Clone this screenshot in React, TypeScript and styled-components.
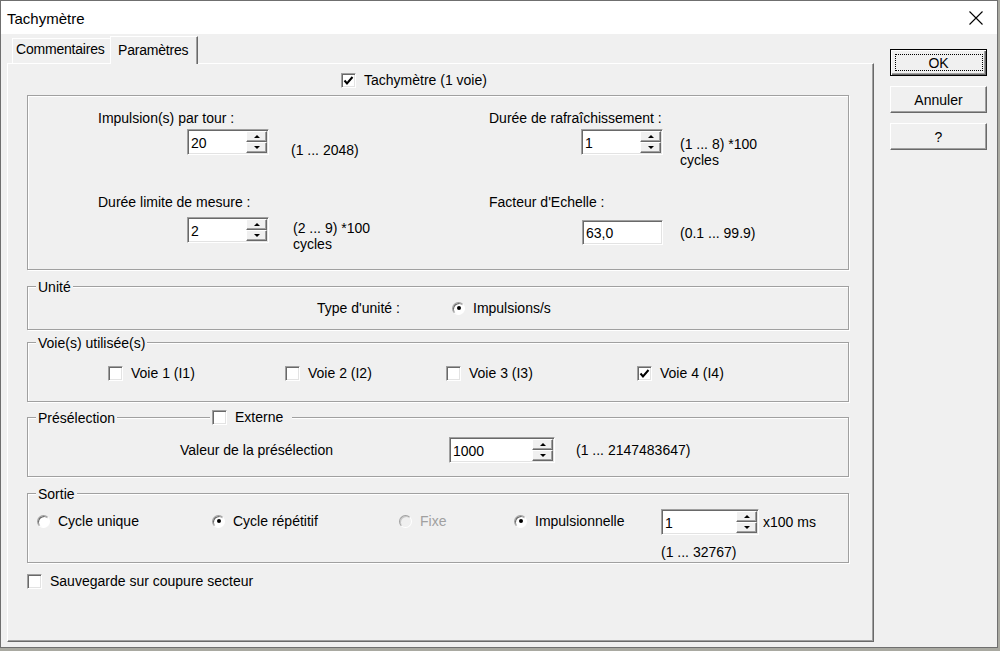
import React from "react";
import styled, { createGlobalStyle } from "styled-components";

const GlobalStyle = createGlobalStyle`
  html, body {
    margin: 0;
    padding: 0;
    background: #a9a9a1;
  }
  body {
    font-family: "Liberation Sans", Arial, sans-serif;
    font-size: 14px;
    color: #000;
  }
  * {
    box-sizing: border-box;
  }
`;

const Window = styled.div`
  width: 998px;
  height: 648px;
  display: flex;
  flex-direction: column;
  background: #f0f0f0;
  border: 1px solid #6f6f6f;
`;

const TitleBar = styled.div`
  flex: none;
  height: 33px;
  display: flex;
  align-items: center;
  justify-content: space-between;
  padding: 1px 14px 0 6px;
  background: #fff;
  font-size: 15px;
`;

const CloseButton = styled.div`
  display: flex;
  width: 14px;
  height: 14px;
`;

const Body = styled.div`
  flex: 1;
  display: flex;
  align-items: flex-start;
  padding: 2px 0 0 6px;
`;

const TabControl = styled.div`
  width: 867px;
  display: flex;
  flex-direction: column;
`;

const TabStrip = styled.div`
  height: 27px;
  display: flex;
  align-items: flex-end;
  padding-left: 5px;
`;

const Tab = styled.div<{ $active?: boolean; $width: number }>`
  position: relative;
  z-index: ${(p) => (p.$active ? 1 : 0)};
  width: ${(p) => p.$width}px;
  height: ${(p) => (p.$active ? 28 : 25)}px;
  margin-bottom: ${(p) => (p.$active ? -1 : 0)}px;
  padding: ${(p) => (p.$active ? "5px 0 0 7px" : "2px 0 0 3px")};
  line-height: 16px;
  white-space: nowrap;
  letter-spacing: -0.2px;
  background: #f0f0f0;
  border-top: 1px solid #fff;
  border-left: 1px solid #fff;
  border-right: ${(p) => (p.$active ? "1px solid #696969" : "none")};
  box-shadow: ${(p) => (p.$active ? "inset -1px 0 0 #a0a0a0" : "none")};
`;

const Panel = styled.div`
  height: 579px;
  padding: 8px 24px 0 19px;
  border: 1px solid;
  border-color: #fff #696969 #696969 #fff;
  box-shadow: inset -1px -1px 0 #a0a0a0;
`;

const HeaderRow = styled.div`
  display: flex;
  padding-left: 314px;
`;

const Group = styled.div<{ $height: number; $top: number }>`
  position: relative;
  height: ${(p) => p.$height}px;
  margin-top: ${(p) => p.$top}px;
  border: 1px solid #a0a0a0;
  box-shadow: inset 1px 1px 0 #fff, 1px 1px 0 #fff;
`;

const GroupTitle = styled.span`
  position: absolute;
  top: -8px;
  left: 8px;
  padding: 0 2px;
  line-height: 16px;
  background: #f0f0f0;
`;

const TitleCheck = styled.div`
  position: absolute;
  top: -9px;
  left: 182px;
  padding: 0 9px 0 2px;
  background: #f0f0f0;
`;

const ParamGrid = styled.div`
  display: grid;
  grid-template-columns: 391px 1fr;
  grid-template-rows: 84px auto;
  padding: 14px 0 0 70px;
`;

const Field = styled.div`
  display: flex;
  flex-direction: column;
`;

const Label = styled.div<{ $width?: number }>`
  line-height: 16px;
  white-space: nowrap;
  width: ${(p) => (p.$width ? `${p.$width}px` : "auto")};
  flex: none;
`;

const ControlRow = styled.div<{ $indent: number; $gap: number }>`
  display: flex;
  align-items: flex-start;
  margin-left: ${(p) => p.$indent}px;
  margin-top: ${(p) => p.$gap}px;
`;

const Hint = styled.div<{ $left: number; $top: number }>`
  margin-left: ${(p) => p.$left}px;
  margin-top: ${(p) => p.$top}px;
  line-height: 16px;
  white-space: nowrap;
`;

const Sunken = styled.div<{ $width: number; $height: number }>`
  flex: none;
  display: flex;
  align-items: stretch;
  width: ${(p) => p.$width}px;
  height: ${(p) => p.$height}px;
  padding: 1px;
  background: #fff;
  border: 1px solid;
  border-color: #a0a0a0 #fff #fff #a0a0a0;
  box-shadow: inset 1px 1px 0 #696969, inset -1px -1px 0 #e3e3e3;
`;

const Value = styled.div`
  flex: 1;
  display: flex;
  align-items: center;
  padding: 1px 0 0 2px;
`;

const SpinButtons = styled.div`
  display: flex;
  flex-direction: column;
  width: 21px;
`;

const SpinButton = styled.div`
  flex: 1;
  display: flex;
  align-items: center;
  justify-content: center;
  background: #f0f0f0;
  border: 1px solid;
  border-color: #fff #696969 #696969 #fff;
  box-shadow: inset -1px -1px 0 #a0a0a0;
`;

const Arrow = styled.span<{ $down?: boolean }>`
  width: 0;
  height: 0;
  border-left: 3px solid transparent;
  border-right: 3px solid transparent;
  border-bottom: ${(p) => (p.$down ? "none" : "3px solid #000")};
  border-top: ${(p) => (p.$down ? "3px solid #000" : "none")};
`;

const OptionRow = styled.div<{ $top: number; $left: number }>`
  display: flex;
  align-items: center;
  padding: ${(p) => `${p.$top}px 0 0 ${p.$left}px`};
`;

const ChannelGrid = styled.div`
  display: grid;
  grid-template-columns: 177px 161px 191px auto;
  padding: 22px 0 0 80px;
`;

const OutputGrid = styled.div`
  display: grid;
  grid-template-columns: 175px 187px 115px 147px auto;
  align-items: start;
  padding: 15px 0 0 9px;
`;

const OutputRadio = styled.div`
  margin-top: 4px;
`;

const SpinColumn = styled.div`
  display: flex;
  flex-direction: column;
`;

const SpinRow = styled.div`
  display: flex;
  align-items: center;
  gap: 4px;
`;

const Item = styled.label<{ $disabled?: boolean }>`
  display: flex;
  align-items: center;
  gap: 8px;
  height: 16px;
  line-height: 16px;
  white-space: nowrap;
  color: ${(p) => (p.$disabled ? "#a0a0a0" : "#000")};
`;

const Box = styled.span`
  flex: none;
  display: flex;
  align-items: center;
  justify-content: center;
  width: 15px;
  height: 15px;
  background: #fff;
  border: 1px solid;
  border-color: #a0a0a0 #fff #fff #a0a0a0;
  box-shadow: inset 1px 1px 0 #696969, inset -1px -1px 0 #e3e3e3;
`;

const Circle = styled.span<{ $disabled?: boolean }>`
  flex: none;
  display: flex;
  align-items: center;
  justify-content: center;
  width: 13px;
  height: 13px;
  border-radius: 50%;
  background: ${(p) => (p.$disabled ? "#f0f0f0" : "#fff")};
  border: 1px solid;
  border-color: #a0a0a0 #fff #fff #a0a0a0;
  box-shadow: ${(p) =>
    p.$disabled ? "inset 1px 1px 0 #c8c8c8" : "inset 1px 1px 0 #696969"};
`;

const Dot = styled.span`
  width: 4px;
  height: 4px;
  border-radius: 50%;
  background: #000;
`;

const SaveRow = styled.div`
  display: flex;
  margin-top: 10px;
`;

const ButtonColumn = styled.div`
  display: flex;
  flex-direction: column;
  gap: 10px;
  margin-left: 16px;
  padding-top: 13px;
`;

const Button = styled.div<{ $default?: boolean }>`
  position: relative;
  width: 97px;
  height: 27px;
  display: flex;
  align-items: center;
  justify-content: center;
  background: #f0f0f0;
  border: 1px solid;
  border-color: ${(p) => (p.$default ? "#000" : "#fff #696969 #696969 #fff")};
  box-shadow: ${(p) =>
    p.$default
      ? "inset 1px 1px 0 #fff, inset -1px -1px 0 #696969, inset -2px -2px 0 #a0a0a0"
      : "inset -1px -1px 0 #a0a0a0"};

  &::after {
    content: "";
    display: ${(p) => (p.$default ? "block" : "none")};
    position: absolute;
    inset: 4px 3px 4px 4px;
    border: 1px dotted #000;
  }
`;

const Check = ({
  label,
  checked,
}: {
  label: string;
  checked?: boolean;
}) => (
  <Item>
    <Box>
      {checked && (
        <svg width="11" height="11" viewBox="0 0 11 11">
          <polyline
            points="1.5,5.5 4,8.5 9.5,2"
            fill="none"
            stroke="#000"
            strokeWidth="2"
          />
        </svg>
      )}
    </Box>
    {label}
  </Item>
);

const Radio = ({
  label,
  checked,
  disabled,
}: {
  label: string;
  checked?: boolean;
  disabled?: boolean;
}) => (
  <Item $disabled={disabled}>
    <Circle $disabled={disabled}>{checked && <Dot />}</Circle>
    {label}
  </Item>
);

const Spin = ({ value, width }: { value: string; width: number }) => (
  <Sunken $width={width} $height={26}>
    <Value>{value}</Value>
    <SpinButtons>
      <SpinButton>
        <Arrow />
      </SpinButton>
      <SpinButton>
        <Arrow $down />
      </SpinButton>
    </SpinButtons>
  </Sunken>
);

const App: React.FC = () => {
  return (
    <>
      <GlobalStyle />
      <Window>
        <TitleBar>
          <span>Tachymètre</span>
          <CloseButton>
            <svg width="14" height="14" viewBox="0 0 14 14">
              <path d="M0.5 0.5 L13.5 13.5 M13.5 0.5 L0.5 13.5" stroke="#000" strokeWidth="1.1" />
            </svg>
          </CloseButton>
        </TitleBar>
        <Body>
          <TabControl>
            <TabStrip>
              <Tab $width={98}>Commentaires</Tab>
              <Tab $active $width={88}>Paramètres</Tab>
            </TabStrip>
            <Panel>
              <HeaderRow>
                <Check label="Tachymètre (1 voie)" checked />
              </HeaderRow>

              <Group $height={175} $top={7}>
                <ParamGrid>
                  <Field>
                    <Label>Impulsion(s) par tour :</Label>
                    <ControlRow $indent={89} $gap={3}>
                      <Spin value="20" width={82} />
                      <Hint $left={22} $top={13}>(1 ... 2048)</Hint>
                    </ControlRow>
                  </Field>
                  <Field>
                    <Label>Durée de rafraîchissement :</Label>
                    <ControlRow $indent={92} $gap={3}>
                      <Spin value="1" width={82} />
                      <Hint $left={17} $top={7}>
                        (1 ... 8) *100
                        <br />
                        cycles
                      </Hint>
                    </ControlRow>
                  </Field>
                  <Field>
                    <Label>Durée limite de mesure :</Label>
                    <ControlRow $indent={89} $gap={7}>
                      <Spin value="2" width={82} />
                      <Hint $left={24} $top={3}>
                        (2 ... 9) *100
                        <br />
                        cycles
                      </Hint>
                    </ControlRow>
                  </Field>
                  <Field>
                    <Label>Facteur d'Echelle :</Label>
                    <ControlRow $indent={93} $gap={10}>
                      <Sunken $width={81} $height={25}>
                        <Value>63,0</Value>
                      </Sunken>
                      <Hint $left={17} $top={5}>(0.1 ... 99.9)</Hint>
                    </ControlRow>
                  </Field>
                </ParamGrid>
              </Group>

              <Group $height={44} $top={16}>
                <GroupTitle>Unité</GroupTitle>
                <OptionRow $top={13} $left={289}>
                  <Label $width={135}>Type d'unité :</Label>
                  <Radio label="Impulsions/s" checked />
                </OptionRow>
              </Group>

              <Group $height={60} $top={12}>
                <GroupTitle>Voie(s) utilisée(s)</GroupTitle>
                <ChannelGrid>
                  <Check label="Voie 1 (I1)" />
                  <Check label="Voie 2 (I2)" />
                  <Check label="Voie 3 (I3)" />
                  <Check label="Voie 4 (I4)" checked />
                </ChannelGrid>
              </Group>

              <Group $height={60} $top={15}>
                <GroupTitle>Présélection</GroupTitle>
                <TitleCheck>
                  <Check label="Externe" />
                </TitleCheck>
                <OptionRow $top={19} $left={152}>
                  <Label $width={269}>Valeur de la présélection</Label>
                  <Spin value="1000" width={106} />
                  <Hint $left={21} $top={0}>(1 ... 2147483647)</Hint>
                </OptionRow>
              </Group>

              <Group $height={70} $top={16}>
                <GroupTitle>Sortie</GroupTitle>
                <OutputGrid>
                  <OutputRadio>
                    <Radio label="Cycle unique" />
                  </OutputRadio>
                  <OutputRadio>
                    <Radio label="Cycle répétitif" checked />
                  </OutputRadio>
                  <OutputRadio>
                    <Radio label="Fixe" disabled />
                  </OutputRadio>
                  <OutputRadio>
                    <Radio label="Impulsionnelle" checked />
                  </OutputRadio>
                  <SpinColumn>
                    <SpinRow>
                      <Spin value="1" width={98} />
                      <span>x100 ms</span>
                    </SpinRow>
                    <Hint $left={0} $top={9}>(1 ... 32767)</Hint>
                  </SpinColumn>
                </OutputGrid>
              </Group>

              <SaveRow>
                <Check label="Sauvegarde sur coupure secteur" />
              </SaveRow>
            </Panel>
          </TabControl>

          <ButtonColumn>
            <Button $default>OK</Button>
            <Button>Annuler</Button>
            <Button>?</Button>
          </ButtonColumn>
        </Body>
      </Window>
    </>
  );
};

export default App;
